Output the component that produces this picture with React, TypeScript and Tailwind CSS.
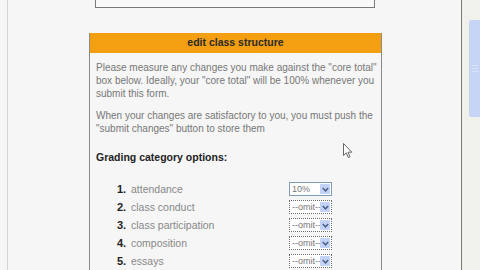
import React from 'react';

const rows = [
  { n: '1.', label: 'attendance', value: '10%', solid: true },
  { n: '2.', label: 'class conduct', value: '--omit--' },
  { n: '3.', label: 'class participation', value: '--omit--' },
  { n: '4.', label: 'composition', value: '--omit--' },
  { n: '5.', label: 'essays', value: '--omit--' },
];

function Chevron() {
  return (
    <svg width="7" height="5" viewBox="0 0 7 5">
      <path d="M0.8 1 L3.5 3.8 L6.2 1" fill="none" stroke="#4a5f8a" strokeWidth="1.5" />
    </svg>
  );
}

function FakeSelect({ value, solid }: { value: string; solid?: boolean }) {
  return (
    <div
      className={`flex items-center h-[14px] w-[43px] bg-white pl-[2px] pr-[1px] ${
        solid ? 'border border-[#7f9db9]' : 'border border-dotted border-[#6d6d6d]'
      }`}
    >
      <span className="flex-1 overflow-hidden whitespace-nowrap text-[9px] leading-none text-[#777]">{value}</span>
      <span className="flex shrink-0 items-center justify-center w-[10px] h-[10px] bg-[#c3d3f7] rounded-[1px]">
        <Chevron />
      </span>
    </div>
  );
}

export default function App() {
  return (
    <div
      className="relative flex w-[480px] h-[270px] overflow-hidden bg-[#f6f6f6] text-[#777]"
      style={{ fontFamily: '"Liberation Sans", Arial, sans-serif' }}
    >
      {/* left frame edge */}
      <div className="w-[8px] shrink-0 border-r border-[#d4d4d4]" />

      {/* page content */}
      <div className="flex-1 flex flex-col items-start">
        {/* tail of previous box */}
        <div className="ml-[87px] w-[280px] h-[11px] bg-[#f9f9f9] border-x border-b border-[#7a7a7a]" />

        {/* edit class structure panel */}
        <div className="ml-[81px] mt-[25px] w-[293px] border-x border-[#8a8a8a]">
          <div className="h-[20px] bg-[#f49e12] flex items-center justify-center text-[10.5px] font-bold text-[#2a2a2a]">
            edit class structure
          </div>
          <div className="pl-[6px] pr-[3px] pt-[8px] text-[10px] leading-[13px]">
            <p>
              Please measure any changes you make against the "core total" box below. Ideally, your "core total" will
              be 100% whenever you submit this form.
            </p>
            <p className="mt-[9px]">
              When your changes are satisfactory to you, you must push the "submit changes" button to store them
            </p>
            <div className="mt-[15px] text-[10.5px] leading-[15px] font-bold text-[#222]">Grading category options:</div>
            <div className="mt-[15px] flex flex-col">
              {rows.map((r) => (
                <div key={r.n} className="flex items-center h-[18px]">
                  <span className="ml-[21px] w-[14px] text-[11px] font-bold text-[#222]">{r.n}</span>
                  <span className="w-[158px] text-[10.5px] text-[#888]">{r.label}</span>
                  <FakeSelect value={r.value} solid={r.solid} />
                </div>
              ))}
            </div>
          </div>
        </div>
      </div>

      {/* right frame edge + scrollbar */}
      <div className="w-[1px] shrink-0 bg-[#7a7a7a]" />
      <div className="w-[18px] shrink-0 bg-[#f1f1ec] pl-[7px] pt-[20px]">
        <div className="h-[97px] bg-[#c6d4f6] rounded-l-[2px] flex flex-col items-center justify-center gap-[2px]">
          <div className="w-[6px] h-[1px] bg-[#dbe3f8]" />
          <div className="w-[6px] h-[1px] bg-[#dbe3f8]" />
          <div className="w-[6px] h-[1px] bg-[#dbe3f8]" />
        </div>
      </div>

      {/* mouse cursor */}
      <svg className="absolute left-[343px] top-[143px]" width="10" height="16" viewBox="0 0 10 16">
        <path d="M0.5 0.5 L0.5 12.5 L3.3 9.8 L5.3 14.5 L7 13.8 L5 9.2 L8.8 9.2 Z" fill="#fff" stroke="#666" strokeWidth="1" />
      </svg>
    </div>
  );
}
